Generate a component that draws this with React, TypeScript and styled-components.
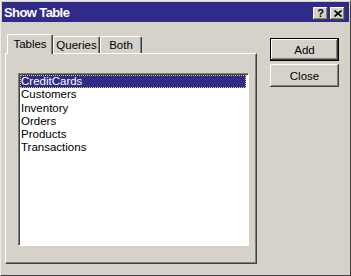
import React from 'react';
import styled, { createGlobalStyle } from 'styled-components';

const face = '#d6d2ca';
const navy = '#302b88';

const GlobalStyle = createGlobalStyle`
  html, body {
    margin: 0;
    padding: 0;
    background: ${face};
  }
  body {
    font-family: "Liberation Sans", Arial, sans-serif;
    font-size: 11px;
    color: #000;
  }
`;

const Window = styled.div`
  width: 351px;
  height: 276px;
  box-sizing: border-box;
  background: ${face};
  border: 1px solid;
  border-color: #eeece6 #404040 #404040 #eeece6;
  padding: 1px;
  display: flex;
  flex-direction: column;
`;

const TitleBar = styled.div`
  height: 20px;
  background: ${navy};
  display: flex;
  align-items: center;
  padding: 0 4px 0 2px;
`;

const Title = styled.span`
  color: #fff;
  font-weight: bold;
  font-size: 13px;
  letter-spacing: -0.6px;
  flex: 1;
`;

const CaptionButton = styled.button`
  width: 15px;
  height: 13px;
  margin: 2px 0 0 2px;
  padding: 0;
  background: ${face};
  border: none;
  box-shadow: inset -1px -1px #404040, inset 1px 1px #fff, inset -2px -2px #808080;
  display: flex;
  align-items: center;
  justify-content: center;
  font-family: "Liberation Sans", Arial, sans-serif;
  font-weight: bold;
  font-size: 11px;
  line-height: 1;
  color: #000;
`;

const Body = styled.div`
  flex: 1;
  display: flex;
  padding: 11px 10px 0 3px;
`;

const TabControl = styled.div`
  width: 253px;
  display: flex;
  flex-direction: column;
`;

const TabStrip = styled.div`
  display: flex;
  align-items: flex-end;
  height: 20px;
  padding-left: 2px;
  position: relative;
  z-index: 1;
`;

const Tab = styled.div<{ $active?: boolean; $width: number }>`
  width: ${p => p.$width}px;
  height: ${p => (p.$active ? 20 : 17)}px;
  margin-bottom: ${p => (p.$active ? -1 : 0)}px;
  box-sizing: border-box;
  background: ${face};
  border-top: 1px solid #fff;
  border-left: 1px solid #fff;
  border-right: 1px solid #404040;
  border-radius: 2px 2px 0 0;
  box-shadow: inset -1px 0 #808080;
  display: flex;
  align-items: center;
  justify-content: center;
  padding-bottom: ${p => (p.$active ? 2 : 0)}px;
  font-size: 11.5px;
`;

const TabPanel = styled.div`
  height: 211px;
  box-sizing: border-box;
  border-top: 1px solid #fff;
  border-left: 1px solid #fff;
  border-right: 1px solid #404040;
  border-bottom: 1px solid #404040;
  box-shadow: inset -1px -1px #808080;
  padding: 19px 8px 18px 12px;
  display: flex;
`;

const ListBox = styled.ul`
  flex: 1;
  margin: 0;
  padding: 2px;
  list-style: none;
  background: #fff;
  box-shadow: inset 1px 1px #808080, inset 2px 2px #404040, 1px 1px 0 0 #fff;
`;

const ListItem = styled.li<{ $selected?: boolean }>`
  height: 13.3px;
  line-height: 13.3px;
  padding-left: 1px;
  box-sizing: border-box;
  font-size: 11.5px;
  background: ${p => (p.$selected ? navy : 'transparent')};
  color: ${p => (p.$selected ? '#fff' : '#000')};
  outline: ${p => (p.$selected ? '1px dotted #d8d070' : 'none')};
  outline-offset: -1px;
`;

const ButtonColumn = styled.div`
  display: flex;
  flex-direction: column;
  gap: 3px;
  margin-left: 13px;
  margin-top: 5px;
`;

const PushButton = styled.button<{ $default?: boolean }>`
  width: 69px;
  height: 23px;
  padding: 0;
  background: ${face};
  border: ${p => (p.$default ? '1px solid #000' : 'none')};
  box-shadow: inset -1px -1px #404040, inset 1px 1px #fff, inset -2px -2px #808080;
  font-family: "Liberation Sans", Arial, sans-serif;
  font-size: 11.5px;
  color: #000;
`;

const tables = ['CreditCards', 'Customers', 'Inventory', 'Orders', 'Products', 'Transactions'];

export default function App() {
  return (
    <>
      <GlobalStyle />
      <Window>
        <TitleBar>
          <Title>Show Table</Title>
          <CaptionButton>?</CaptionButton>
          <CaptionButton>
            <svg width="8" height="7" viewBox="0 0 8 7">
              <path d="M0.5 0.5 L7.5 6.5 M7.5 0.5 L0.5 6.5" stroke="#000" strokeWidth="1.6" />
            </svg>
          </CaptionButton>
        </TitleBar>
        <Body>
          <TabControl>
            <TabStrip>
              <Tab $active $width={46}>Tables</Tab>
              <Tab $width={47}>Queries</Tab>
              <Tab $width={42}>Both</Tab>
            </TabStrip>
            <TabPanel>
              <ListBox>
                {tables.map((t, i) => (
                  <ListItem key={t} $selected={i === 0}>{t}</ListItem>
                ))}
              </ListBox>
            </TabPanel>
          </TabControl>
          <ButtonColumn>
            <PushButton $default>Add</PushButton>
            <PushButton>Close</PushButton>
          </ButtonColumn>
        </Body>
      </Window>
    </>
  );
}
